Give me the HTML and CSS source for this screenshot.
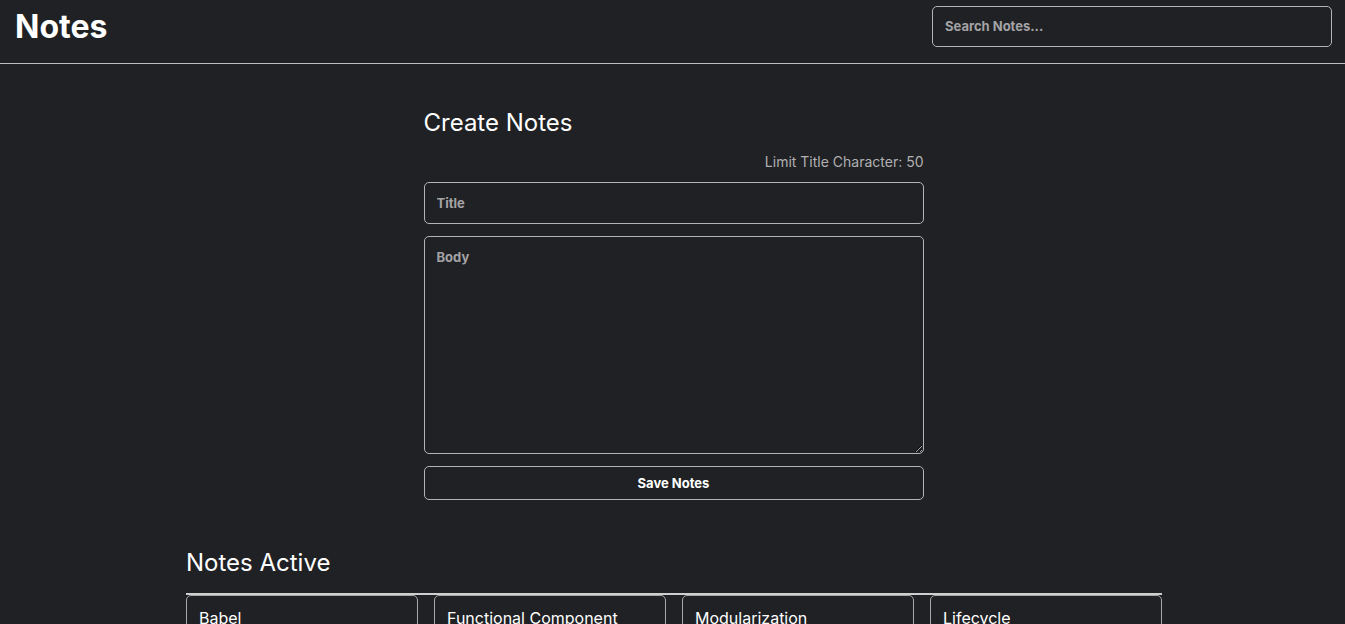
FILE: index.html
```html
<!DOCTYPE html>
<html lang="en">
<head>
<meta charset="utf-8">
<title>Notes</title>
<link rel="stylesheet" href="styles.css">
</head>
<body>
<header class="app-header">
  <h1 class="brand">Notes</h1>
  <input class="search" type="text" placeholder="Search Notes...">
</header>
<main class="main">
  <section class="create">
    <h2 class="section-title">Create Notes</h2>
    <p class="limit">Limit Title Character: 50</p>
    <form class="form">
      <input class="field" type="text" placeholder="Title">
      <textarea class="field body-field" placeholder="Body"></textarea>
      <button class="save" type="button">Save Notes</button>
    </form>
  </section>
  <section class="notes">
    <h2 class="section-title">Notes Active</h2>
    <div class="list">
      <article class="card"><h3 class="card-title">Babel</h3></article>
      <article class="card"><h3 class="card-title">Functional Component</h3></article>
      <article class="card"><h3 class="card-title">Modularization</h3></article>
      <article class="card"><h3 class="card-title">Lifecycle</h3></article>
    </div>
  </section>
</main>
</body>
</html>
```

FILE: styles.css
```css
* { box-sizing: border-box; }
html, body {
  margin: 0;
  background: #202124;
  color: #ffffff;
  font-family: Inter, "Noto Sans", sans-serif;
}
.app-header {
  height: 64px;
  display: flex;
  align-items: center;
  justify-content: space-between;
  padding: 0 13px 1px 15px;
  border-bottom: 1px solid #bdbdbd;
}
.brand {
  margin: 0;
  font-size: 32px;
  font-weight: 700;
  letter-spacing: 0;
  line-height: 1;
  position: relative;
  top: -4px;
}
.search {
  width: 400px;
  height: 41px;
  margin-top: -10px;
  background: transparent;
  border: 1px solid #b4b4b4;
  border-radius: 5px;
  padding: 0 12px;
  color: #fff;
  font-family: Inter, sans-serif;
  font-size: 13px;
  font-weight: 700;
  outline: none;
}
.search::placeholder, .field::placeholder {
  color: #a3a3a6;
  opacity: 1;
}
.main {
  display: flex;
  flex-direction: column;
  align-items: center;
}
.create {
  width: 500px;
  margin: 44px 0 0 2px;
  display: flex;
  flex-direction: column;
}
.section-title {
  margin: 0;
  font-size: 24px;
  font-weight: 400;
  line-height: 29px;
}
.limit {
  margin: 16px 0 0;
  text-align: right;
  font-size: 14px;
  line-height: 17px;
  color: #b0b0b2;
}
.form {
  margin-top: 12px;
  display: flex;
  flex-direction: column;
  gap: 12px;
}
.field {
  width: 100%;
  height: 42px;
  background: transparent;
  border: 1px solid #b4b4b4;
  border-radius: 5px;
  padding: 0 12px;
  color: #fff;
  font-family: Inter, sans-serif;
  font-size: 13px;
  font-weight: 700;
  outline: none;
}
.body-field {
  height: 218px;
  padding: 12px 12px;
  resize: vertical;
  display: block;
}
.save {
  height: 34px;
  background: transparent;
  border: 1px solid #b4b4b4;
  border-radius: 5px;
  color: #fff;
  font-family: Inter, sans-serif;
  font-size: 13px;
  font-weight: 700;
  cursor: pointer;
}
.notes {
  width: 976px;
  margin: 48px 0 0 3px;
}
.list {
  margin-top: 16px;
  border-top: 2px solid #cfcfcf;
  display: grid;
  grid-template-columns: repeat(4, 1fr);
  gap: 16px;
}
.card {
  border: 1px solid #a8a8a8;
  border-radius: 5px;
  height: 120px;
  padding: 12px;
}
.card-title {
  margin: 0;
  font-size: 16px;
  font-weight: 400;
  line-height: 20px;
}
```
